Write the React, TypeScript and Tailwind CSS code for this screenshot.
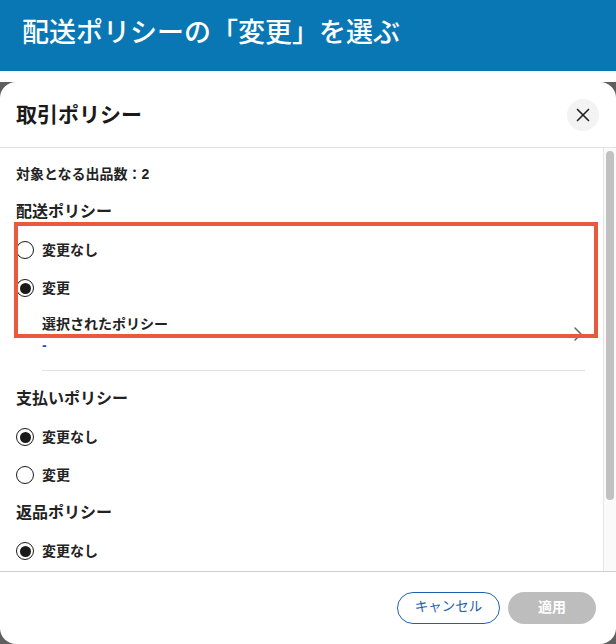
import React from 'react';
import { X, ChevronRight } from 'lucide-react';

const font = "font-['Liberation_Sans','Noto_Sans_CJK_JP',sans-serif]";

const Radio: React.FC<{ label: string; checked?: boolean }> = ({ label, checked }) => (
  <div className="flex items-center h-[38px] gap-[8px]">
    <span className="w-[18px] h-[18px] rounded-full border border-[#1a1a1a] bg-white flex items-center justify-center shrink-0">
      {checked && <span className="w-[11px] h-[11px] rounded-full bg-[#1a1a1a]" />}
    </span>
    <span className="text-[14px] leading-[18px] font-bold text-[#222]">{label}</span>
  </div>
);

const SectionTitle: React.FC<{ children: React.ReactNode }> = ({ children }) => (
  <h3 className="text-[16px] leading-[20px] font-bold text-[#222]">{children}</h3>
);

export default function App() {
  return (
    <div className={`${font} w-[616px] h-[644px] bg-white relative overflow-hidden flex flex-col`}>
      {/* Blue title */}
      <div className="h-[71px] shrink-0 bg-[#0a77b5] flex items-center px-[22px] pb-[5px]">
        <h1 className="text-[27px] leading-[32px] font-medium text-white">配送ポリシーの「変更」を選ぶ</h1>
      </div>

      {/* Backdrop + modal */}
      <div className="mt-[11px] flex-1 bg-[#5f5f5f] min-h-0">
        <div className="h-full bg-white rounded-[16px] flex flex-col">
          <div className="h-[66px] shrink-0 border-b border-[#e2e2e2] flex items-center justify-between pl-[16px] pr-[17px]">
            <h2 className="text-[21px] leading-[28px] font-bold text-[#1a1a1a]">取引ポリシー</h2>
            <button className="w-[32px] h-[32px] rounded-full bg-[#f3f3f3] flex items-center justify-center">
              <X size={22} strokeWidth={1.8} className="text-[#222]" />
            </button>
          </div>

          <div className="flex-1 min-h-0 flex overflow-hidden">
            <div className="flex-1 pl-[16px] pr-[18px] pt-[16px] overflow-hidden">
              <p className="text-[14px] leading-[20px] font-bold text-[#222] mb-[18px]">対象となる出品数：2</p>

              <SectionTitle>配送ポリシー</SectionTitle>
              <div className="mt-[9px]">
                <Radio label="変更なし" />
                <Radio label="変更" checked />
              </div>
              <div className="ml-[26px] mt-[8px] pb-[16px] border-b border-[#e2e2e2] flex items-center justify-between">
                <div>
                  <p className="text-[14px] leading-[18px] font-bold text-[#222]">選択されたポリシー</p>
                  <p className="text-[14px] leading-[18px] mt-[3px] font-bold text-[#1d4fc0]">-</p>
                </div>
                <ChevronRight size={24} strokeWidth={1.5} className="text-[#666] -mr-[5px] -mt-[1px]" />
              </div>

              <div className="mt-[18px]">
                <SectionTitle>支払いポリシー</SectionTitle>
              </div>
              <div className="mt-[9px]">
                <Radio label="変更なし" checked />
                <Radio label="変更" />
              </div>
              <div className="mt-[9px]">
                <SectionTitle>返品ポリシー</SectionTitle>
              </div>
              <div className="mt-[9px]">
                <Radio label="変更なし" checked />
              </div>
            </div>

            {/* Scrollbar */}
            <div className="w-[13px] shrink-0 bg-[#fafafa] border-l border-[#e6e6e6] pl-[2px] pr-[2px] pt-[3px]">
              <div className="w-[8px] h-[349px] rounded-full bg-[#c1c1c1]" />
            </div>
          </div>

          <div className="h-[73px] shrink-0 border-t border-[#cfcfcf] flex items-center justify-end gap-[8px] pr-[20px] pb-[1px]">
            <button className="w-[103px] h-[32px] rounded-full border border-[#1d62ad] text-[13.5px] font-normal text-[#1d62ad] bg-white">
              キャンセル
            </button>
            <button className="w-[88px] h-[32px] rounded-full bg-[#bdbdbd] text-[14px] font-bold text-white">適用</button>
          </div>
        </div>
      </div>

      {/* Red annotation */}
      <div className="absolute left-[14px] top-[222px] w-[584px] h-[116px] border-[4px] border-[#e8593d] pointer-events-none" />
    </div>
  );
}
